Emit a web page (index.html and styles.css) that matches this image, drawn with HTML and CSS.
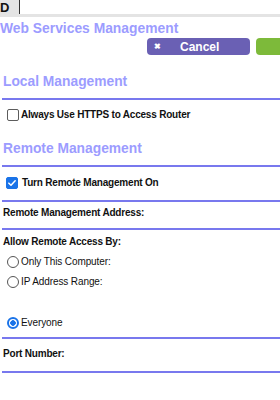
FILE: index.html
```html
<!DOCTYPE html>
<html lang="en">
<head>
  <meta charset="UTF-8">
  <meta name="viewport" content="width=device-width, initial-scale=1.0">
  <title>Web Services Management</title>
  <link rel="stylesheet" href="styles.css">
</head>

<body>
  <div class="topbar">
    <div class="topbar-tab">D</div>
    <div class="topbar-field"></div>
  </div>

  <h1 class="page-title">Web Services Management</h1>

  <div class="actions">
    <button class="btn btn-cancel"><span class="btn-x">&#x2716;</span>Cancel</button>
    <button class="btn btn-apply"></button>
  </div>

  <section class="section">
    <h2 class="section-title">Local Management</h2>
    <div class="check-row">
      <label class="check-label"><span class="checkbox"></span>Always Use HTTPS to Access Router</label>
    </div>
  </section>

  <section class="section">
    <h2 class="section-title">Remote Management</h2>
    <div class="check-row lined">
      <label class="check-label"><span class="checkbox checked">
        <svg viewBox="0 0 12 12" width="10" height="10"><path d="M2.2 6.2 L4.8 8.7 L9.8 3.4" fill="none" stroke="#fff" stroke-width="1.8" stroke-linecap="round" stroke-linejoin="round"/></svg>
      </span>Turn Remote Management On</label>
    </div>
    <div class="field-row lined address-row">Remote Management Address:</div>
    <div class="access lined">
      <div class="field-label">Allow Remote Access By:</div>
      <label class="radio-label"><span class="radio"></span>Only This Computer:</label>
      <label class="radio-label"><span class="radio"></span>IP Address Range:</label>
      <div class="radio-spacer"></div>
      <label class="radio-label"><span class="radio checked"></span>Everyone</label>
    </div>
    <div class="field-row lined port-row">Port Number:</div>
  </section>
</body>
</html>
```

FILE: styles.css
```css
:root {
  --title-color: #9c9cff;
  --line-color: #7878ee;
  --text-color: #111;
  --cancel-color: #6a60b4;
  --apply-color: #7dba3a;
  --check-color: #1a73e8;
}

* {
  margin: 0;
  padding: 0;
  box-sizing: border-box;
  font-family: 'Liberation Sans', Arial, sans-serif;
}

body {
  background: #fff;
  color: var(--text-color);
  width: 280px;
  overflow: hidden;
}

.topbar {
  display: flex;
  height: 17px;
  background: #e4e4e4;
  padding-bottom: 3px;
}

.topbar-tab {
  width: 20px;
  font-weight: bold;
  font-size: 13px;
  line-height: 15px;
  border-right: 1px solid #333;
}

.topbar-field {
  flex: 1;
  background: #fff;
}

.page-title {
  font-size: 13.85px;
  font-weight: bold;
  color: var(--title-color);
  margin: 3px 0 0 0;
  line-height: 17px;
}

.actions {
  display: flex;
  justify-content: flex-end;
  gap: 6px;
  margin-right: -30px;
  margin-top: 1px;
}

.btn {
  height: 17px;
  border: none;
  border-radius: 4px;
  color: #fff;
  font-weight: bold;
  font-size: 12px;
}

.btn-cancel {
  width: 103px;
  background: var(--cancel-color);
  display: flex;
  align-items: center;
  padding-left: 7px;
}

.btn-x {
  font-size: 8px;
  margin-right: 19px;
}

.btn-apply {
  width: 54px;
  background: var(--apply-color);
}

.section {
  padding-left: 2px;
}

.section-title {
  font-size: 13.8px;
  font-weight: bold;
  line-height: 18px;
  color: var(--title-color);
  padding: 18px 0 7px 1px;
  border-bottom: 2px solid var(--line-color);
}

.lined {
  border-bottom: 2px solid var(--line-color);
}

.check-row {
  padding: 8px 0 0 5px;
  font-size: 10px;
  letter-spacing: -0.2px;
  line-height: 14px;
}

.check-row.lined {
  padding: 9px 0 10px 4px;
}

.check-label {
  display: flex;
  align-items: center;
  gap: 2px;
  font-weight: bold;
}

.checkbox {
  width: 12px;
  height: 12px;
  border: 1px solid #5c5c5c;
  border-radius: 2px;
  display: flex;
  align-items: center;
  justify-content: center;
}

.checkbox.checked {
  background: var(--check-color);
  border-color: var(--check-color);
  margin-right: 2px;
}

.field-row,
.field-label {
  font-weight: bold;
  font-size: 10px;
  letter-spacing: -0.2px;
  line-height: 14px;
}

.field-row {
  padding-left: 1px;
}

.address-row {
  padding-top: 4px;
  padding-bottom: 8px;
}

.port-row {
  padding-top: 8px;
  padding-bottom: 10px;
}

.access {
  display: flex;
  flex-direction: column;
  gap: 6px;
  padding: 5px 0 7px 1px;
}

.radio-label {
  display: flex;
  align-items: center;
  gap: 2px;
  padding-left: 4px;
  font-size: 10px;
  letter-spacing: -0.1px;
  line-height: 14px;
}

.radio {
  width: 12px;
  height: 12px;
  border: 1px solid #555;
  border-radius: 50%;
}

.radio.checked {
  border: 2px solid var(--check-color);
  background: radial-gradient(circle, var(--check-color) 0 2.5px, #fff 3px);
}

.radio-spacer {
  height: 15px;
}
```
